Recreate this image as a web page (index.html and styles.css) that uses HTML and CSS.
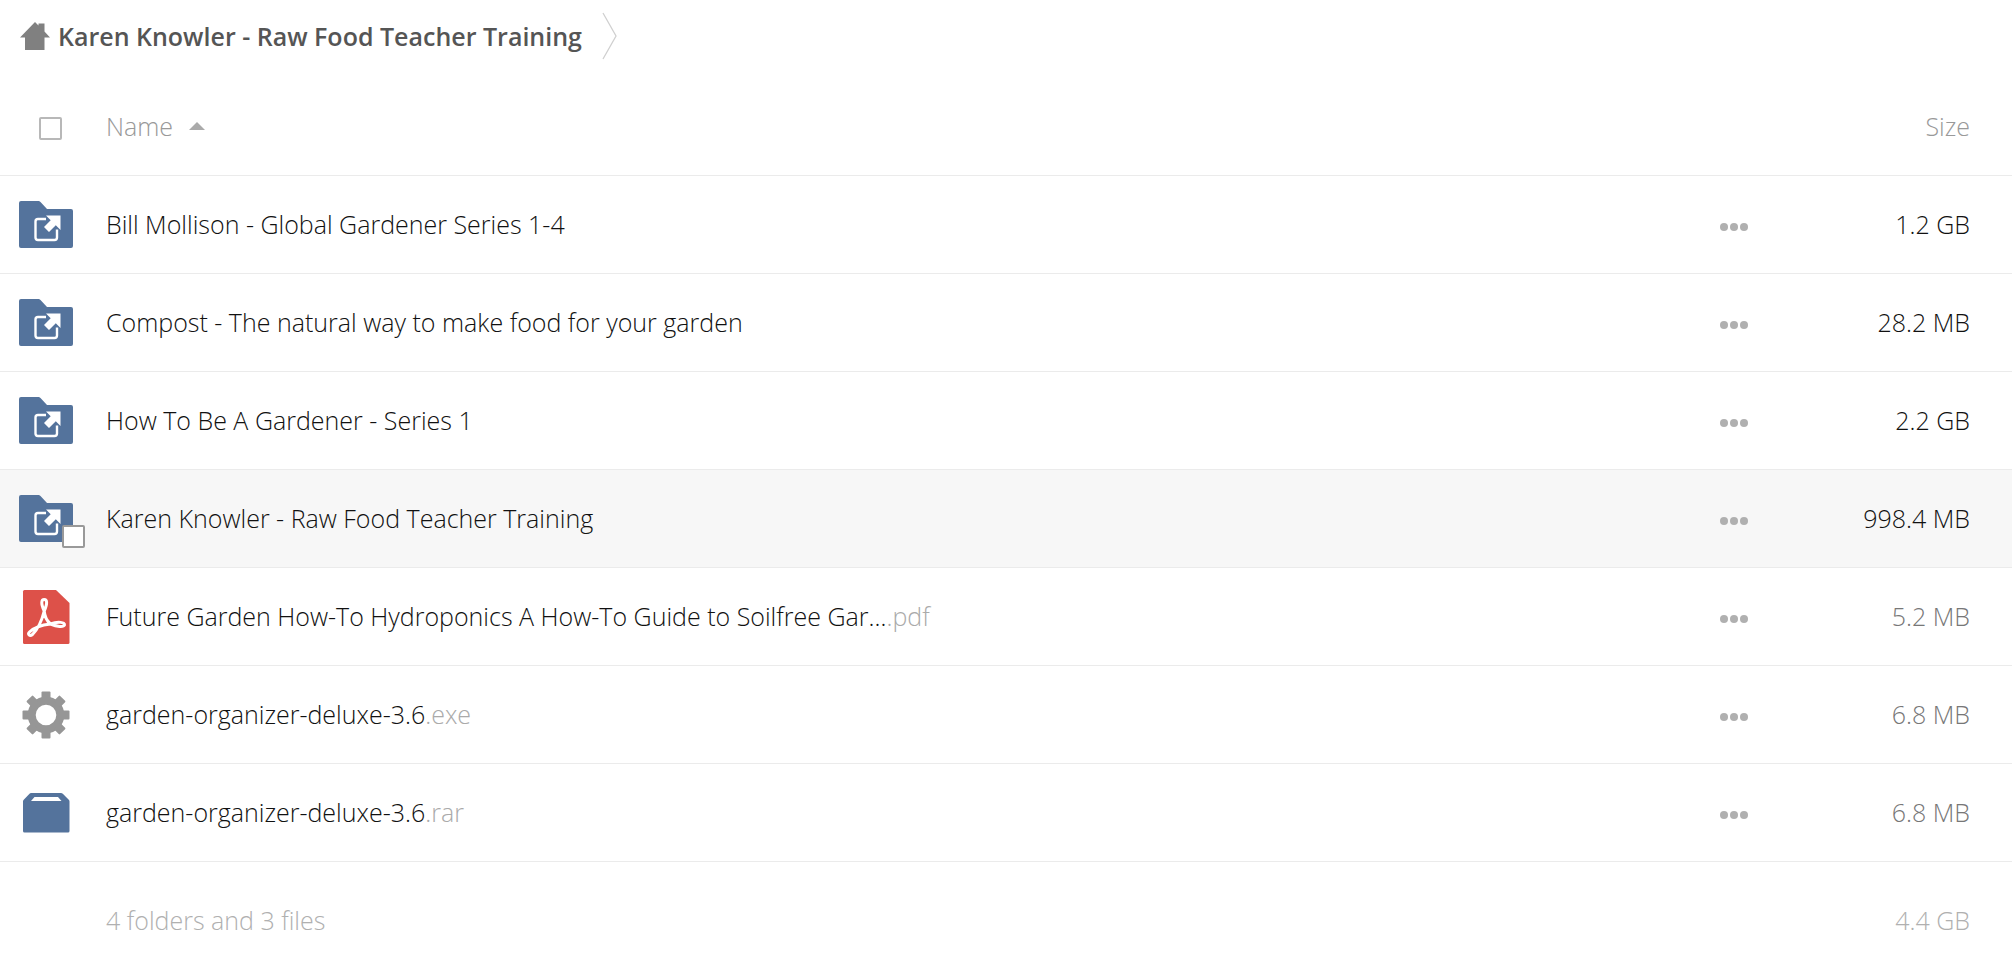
FILE: index.html
```html
<!DOCTYPE html>
<html lang="en">
<head>
<meta charset="utf-8">
<title>Files</title>
<link rel="stylesheet" href="styles.css">
</head>
<body>
<svg class="sprite" aria-hidden="true">
  <symbol id="folder" viewBox="0 0 54 47">
    <path d="M2 0H19.500Q20.500 0 21.500 1L28 8H52Q54 8 54 10V45Q54 47 52 47H2Q0 47 0 45V2Q0 0 2 0Z" fill="#54739c"/>
    <path d="M27 18H19Q16.500 18 16.500 20.500V36.500Q16.500 39 19 39H35.500Q38 39 38 36.500V28.500" fill="none" stroke="#fff" stroke-width="2.400"/>
    <path d="M27 14.500H41.500V29L36.800 24.300L30 31L25 26L31.700 19.200Z" fill="#fff"/>
  </symbol>
  <symbol id="dots" viewBox="0 0 28 8">
    <circle cx="4" cy="4" r="4"/><circle cx="14" cy="4" r="4"/><circle cx="24" cy="4" r="4"/>
  </symbol>
</svg>

<nav class="crumbs" aria-label="Breadcrumb">
  <a class="crumb" href="#">
    <svg class="home" width="30" height="28" viewBox="0 0 30 28" aria-hidden="true"><path d="M15 0L18.500 3.500V1.500H24.500V9.500L30 15.500H24.500V28H5V15.500H0Z" fill="#808080"/></svg>
    <span>Karen Knowler - Raw Food Teacher Training</span>
  </a>
  <svg class="chevron" width="16" height="48" viewBox="0 0 16 48" aria-hidden="true"><path d="M1 1L14 24L1 47" fill="none" stroke="#d0d0d0" stroke-width="1.300"/></svg>
</nav>

<main>
<table class="files">
  <colgroup><col class="col-icon"><col><col class="col-actions"><col class="col-size"></colgroup>
  <thead>
    <tr>
      <th class="pick"><input class="check" type="checkbox" aria-label="Select all"></th>
      <th class="name"><button class="sort" type="button">Name<svg width="16" height="8" viewBox="0 0 16 8" aria-hidden="true"><path d="M8 0L16 8H0Z" fill="#aaa"/></svg></button></th>
      <th></th>
      <th class="size"><button class="sort" type="button">Size</button></th>
    </tr>
  </thead>
  <tbody>
    <tr>
      <td class="icon"><svg width="54" height="47" aria-hidden="true"><use href="#folder"/></svg></td>
      <td class="name"><a href="#">Bill Mollison - Global Gardener Series 1-4</a></td>
      <td class="actions"><button type="button" aria-label="Actions"><svg width="28" height="8"><use href="#dots"/></svg></button></td>
      <td class="size big">1.2 GB</td>
    </tr>
    <tr>
      <td class="icon"><svg width="54" height="47" aria-hidden="true"><use href="#folder"/></svg></td>
      <td class="name"><a href="#">Compost - The natural way to make food for your garden</a></td>
      <td class="actions"><button type="button" aria-label="Actions"><svg width="28" height="8"><use href="#dots"/></svg></button></td>
      <td class="size big">28.2 MB</td>
    </tr>
    <tr>
      <td class="icon"><svg width="54" height="47" aria-hidden="true"><use href="#folder"/></svg></td>
      <td class="name"><a href="#">How To Be A Gardener - Series 1</a></td>
      <td class="actions"><button type="button" aria-label="Actions"><svg width="28" height="8"><use href="#dots"/></svg></button></td>
      <td class="size big">2.2 GB</td>
    </tr>
    <tr class="hovered">
      <td class="icon"><svg width="54" height="47" aria-hidden="true"><use href="#folder"/></svg><input class="check over" type="checkbox" aria-label="Select Karen Knowler - Raw Food Teacher Training"></td>
      <td class="name"><a href="#">Karen Knowler - Raw Food Teacher Training</a></td>
      <td class="actions"><button type="button" aria-label="Actions"><svg width="28" height="8"><use href="#dots"/></svg></button></td>
      <td class="size big">998.4 MB</td>
    </tr>
    <tr>
      <td class="icon"><svg width="54" height="54" viewBox="0 0 54 54" aria-hidden="true">
        <path d="M5.500 0H37L50.500 13V52.500Q50.500 54 49 54H5.500Q4 54 4 52.500V1.500Q4 0 5.500 0Z" fill="#dd5149"/>
        <g fill="none" stroke="#fff" stroke-width="3" stroke-linecap="round" stroke-linejoin="round">
          <path d="M25.200 21C21.500 13 22.500 9.500 25.200 9.500S28.900 13 25.200 21C23 30 18.500 39.500 13.500 44.500C10.500 47 8.500 44 10.500 42C14 38.500 22 35 31.500 34C39.500 30.800 46 32.500 45.500 35C44.500 37.500 38 36.800 31.500 34C28.500 31.500 25.800 27.500 25.200 21Z"/>
        </g></svg></td>
      <td class="name"><a href="#">Future Garden How-To Hydroponics A How-To Guide to Soilfree Gar…<span class="ext">.pdf</span></a></td>
      <td class="actions"><button type="button" aria-label="Actions"><svg width="28" height="8"><use href="#dots"/></svg></button></td>
      <td class="size">5.2 MB</td>
    </tr>
    <tr>
      <td class="icon"><svg width="54" height="48" viewBox="-27 -24 54 48" aria-hidden="true">
        <circle r="14.300" fill="none" stroke="#969696" stroke-width="8"/>
        <g fill="#969696">
          <rect id="tooth" x="-4.500" y="-23.500" width="9" height="8" rx="1"/>
          <use href="#tooth" transform="rotate(45)"/><use href="#tooth" transform="rotate(90)"/><use href="#tooth" transform="rotate(135)"/><use href="#tooth" transform="rotate(180)"/><use href="#tooth" transform="rotate(225)"/><use href="#tooth" transform="rotate(270)"/><use href="#tooth" transform="rotate(315)"/>
        </g></svg></td>
      <td class="name"><a href="#">garden-organizer-deluxe-3.6<span class="ext">.exe</span></a></td>
      <td class="actions"><button type="button" aria-label="Actions"><svg width="28" height="8"><use href="#dots"/></svg></button></td>
      <td class="size">6.8 MB</td>
    </tr>
    <tr>
      <td class="icon"><svg width="54" height="40" viewBox="0 0 54 40" aria-hidden="true"><path fill-rule="evenodd" d="M12 0H42Q43 0 43.800 .800L50 7Q50.500 7.500 50.500 8.500V38Q50.500 39.500 49 39.500H5.500Q4 39.500 4 38V8.500Q4 7.500 4.500 7L10.500 .800Q11.200 0 12 0ZM15.500 4L12 8H42.500L39 4Z" fill="#54739c"/></svg></td>
      <td class="name"><a href="#">garden-organizer-deluxe-3.6<span class="ext">.rar</span></a></td>
      <td class="actions"><button type="button" aria-label="Actions"><svg width="28" height="8"><use href="#dots"/></svg></button></td>
      <td class="size">6.8 MB</td>
    </tr>
  </tbody>
  <tfoot>
    <tr>
      <td></td>
      <td class="name">4 folders and 3 files</td>
      <td></td>
      <td class="size">4.4 GB</td>
    </tr>
  </tfoot>
</table>
</main>
</body>
</html>
```

FILE: styles.css
```css
* { box-sizing: border-box; }

body {
  margin: 0;
  background: #fff;
  color: #111;
  font: 300 25px/36px "Open Sans", "Noto Sans", sans-serif;
}

a { color: inherit; text-decoration: none; }

button {
  padding: 0;
  border: 0;
  background: none;
  color: inherit;
  font: inherit;
  cursor: pointer;
}

svg { display: block; }

.sprite { position: absolute; width: 0; height: 0; }

.crumbs {
  display: flex;
  align-items: center;
  gap: 20px;
  height: 72px;
  padding-left: 20px;
}

.crumb {
  display: flex;
  align-items: center;
  gap: 8px;
  color: #555;
  font-weight: 600;
}

.files {
  width: 100%;
  table-layout: fixed;
  border-collapse: separate;
  border-spacing: 0;
}

.col-icon { width: 106px; }
.col-actions { width: 100px; }
.col-size { width: 228px; }

th, td {
  height: 98px;
  padding: 0;
  border-bottom: 1px solid #ebebeb;
  font-weight: 300;
  text-align: left;
  vertical-align: middle;
}

.name, .size { padding-bottom: 2px; }

thead th { height: 104px; padding-top: 6px; color: #999; }
thead .pick { padding-top: 10px; padding-left: 39px; }

.sort { display: inline-flex; align-items: center; gap: 16px; }

.check {
  appearance: none;
  display: block;
  width: 23px;
  height: 23px;
  margin: 0;
  border: 2px solid #b8b8b8;
  border-radius: 2px;
  background: #fff;
}

.icon { position: relative; padding-left: 19px; }

.over {
  position: absolute;
  left: 62px;
  top: 55px;
  border-color: #999;
}

.hovered { background: #f7f7f7; }

.actions button { display: block; margin: 0 auto; padding: 20px 8px 16px; }
.actions svg { fill: #b0b0b0; }

.size { padding-right: 42px; color: #777; text-align: right; }
thead .size { color: #999; }
.big { color: #111; }
.ext { color: #aaa; }

tfoot td { height: 118px; border: 0; }
tfoot .name, tfoot .size { color: #b0b0b0; }
```
